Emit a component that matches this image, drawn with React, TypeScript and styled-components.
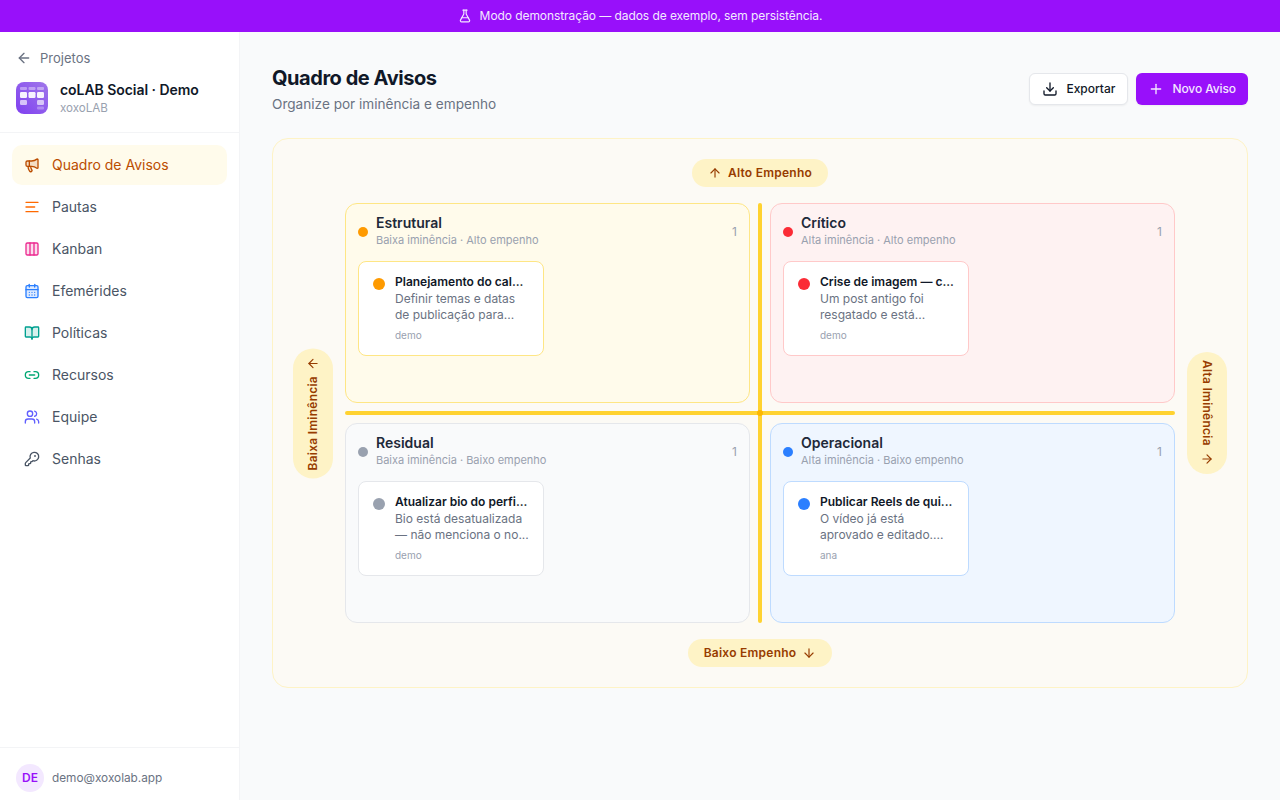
import React from "react";
import styled, { createGlobalStyle } from "styled-components";
import {
  ArrowDown,
  ArrowLeft,
  ArrowRight,
  ArrowUp,
  BookOpen,
  CalendarDays,
  Columns3,
  Download,
  FlaskConical,
  KeyRound,
  Link2,
  Megaphone,
  Plus,
  Users,
} from "lucide-react";

const Global = createGlobalStyle`
  * { box-sizing: border-box; }
  html, body { margin: 0; padding: 0; height: 100%; }
  body { font-family: Inter, "Noto Sans", sans-serif; background: #f9fafb; color: #101828; }
  #root { height: 100%; }
`;

const Page = styled.div`
  display: flex;
  flex-direction: column;
  height: 800px;
  overflow: hidden;
`;

const Banner = styled.div`
  height: 32px;
  flex: none;
  background: #9810fa;
  color: #f3e8ff;
  font-size: 12px;
  line-height: 16px;
  letter-spacing: -0.07px;
  display: flex;
  align-items: center;
  justify-content: center;
  gap: 8px;
`;

const Body = styled.div`
  flex: 1;
  display: flex;
  min-height: 0;
`;

const Sidebar = styled.aside`
  width: 240px;
  flex: none;
  background: #fff;
  border-right: 1px solid #f3f4f6;
  display: flex;
  flex-direction: column;
`;

const SideHead = styled.div`
  height: 101px;
  padding: 16px 16px 0;
  border-bottom: 1px solid #f3f4f6;
`;

const BackLink = styled.div`
  display: flex;
  align-items: center;
  gap: 8px;
  height: 20px;
  font-size: 13px;
  line-height: 20px;
  color: #6a7282;
  margin-bottom: 14px;
`;

const Project = styled.div`
  display: flex;
  align-items: center;
  gap: 12px;
  height: 32px;
`;

const ProjectText = styled.div`
  display: flex;
  flex-direction: column;
`;

const ProjectName = styled.div`
  font-size: 14px;
  line-height: 20px;
  font-weight: 600;
  color: #101828;
  letter-spacing: -0.05px;
`;

const ProjectOrg = styled.div`
  font-size: 11.6px;
  line-height: 16px;
  color: #99a1af;
`;

const Nav = styled.nav`
  flex: 1;
  padding: 12px;
  display: flex;
  flex-direction: column;
  gap: 2px;
`;

const NavItem = styled.div<{ $active?: boolean; $icon: string; $tint?: boolean }>`
  height: 40px;
  display: flex;
  align-items: center;
  gap: 12px;
  padding: 0 12px;
  border-radius: 10px;
  font-size: 14px;
  line-height: 20px;
  color: ${(p) => (p.$active ? "#bb4d00" : "#4a5565")};
  background: ${(p) => (p.$active ? "#fffbeb" : "transparent")};
  svg {
    color: ${(p) => p.$icon};
    flex: none;
    fill: ${(p) => (p.$tint ? "currentColor" : "none")};
    fill-opacity: 0.16;
  }
`;

const SideFoot = styled.div`
  height: 53px;
  flex: none;
  border-top: 1px solid #f3f4f6;
  padding: 16px 16px 0;
  display: flex;
  align-items: flex-start;
  gap: 8px;
`;

const Avatar = styled.div`
  width: 28px;
  height: 28px;
  border-radius: 50%;
  background: #f3e8ff;
  color: #9810fa;
  font-size: 12px;
  line-height: 16px;
  font-weight: 600;
  display: flex;
  align-items: center;
  justify-content: center;
`;

const Email = styled.div`
  font-size: 11.8px;
  line-height: 28px;
  color: #6a7282;
`;

const Main = styled.main`
  flex: 1;
  padding: 32px;
  background: #f9fafb;
  min-width: 0;
`;

const TopRow = styled.header`
  display: flex;
  justify-content: space-between;
  align-items: center;
  margin-bottom: 24px;
`;

const Title = styled.h1`
  margin: 0;
  font-size: 20px;
  line-height: 28px;
  font-weight: 700;
  letter-spacing: -0.45px;
  color: #101828;
`;

const Subtitle = styled.p`
  margin: 2px 0 0;
  font-size: 13.6px;
  line-height: 20px;
  color: #6a7282;
`;

const Actions = styled.div`
  display: flex;
  gap: 8px;
`;

const Button = styled.button<{ $primary?: boolean }>`
  height: 32px;
  display: flex;
  align-items: center;
  gap: 8px;
  padding: 0 12px;
  border-radius: 6px;
  font-family: inherit;
  font-size: 12px;
  line-height: 16px;
  font-weight: 500;
  letter-spacing: ${(p) => (p.$primary ? "-0.1px" : "0")};
  border: ${(p) => (p.$primary ? "none" : "1px solid #e5e7eb")};
  background: ${(p) => (p.$primary ? "#9810fa" : "#fff")};
  color: ${(p) => (p.$primary ? "#f3e8ff" : "#101828")};
  box-shadow: 0 1px 2px rgba(0, 0, 0, 0.05);
`;

const Board = styled.section`
  display: grid;
  grid-template-columns: 40px 830px 40px;
  grid-template-rows: 28px 420px 28px;
  gap: 16px 12px;
  padding: 20px;
  height: 550px;
  background: #fcfaf5;
  border: 1px solid #fef3c6;
  border-radius: 16px;
`;

const PillSlot = styled.div<{ $col: number; $row: number }>`
  grid-column: ${(p) => p.$col};
  grid-row: ${(p) => p.$row};
  display: flex;
  align-items: center;
  justify-content: center;
`;

const Pill = styled.div<{ $dir?: "up" | "down" }>`
  display: flex;
  align-items: center;
  gap: 6px;
  background: #fef3c6;
  color: #973c00;
  font-size: 12px;
  line-height: 16px;
  font-weight: 600;
  letter-spacing: 0.25px;
  border-radius: 999px;
  white-space: nowrap;
  padding: ${(p) => (p.$dir ? "8px 0" : "0 16px")};
  ${(p) => (p.$dir ? "width: 40px; justify-content: center; writing-mode: vertical-rl;" : "height: 28px;")}
  ${(p) => (p.$dir === "up" ? "transform: rotate(180deg);" : "")}
`;

const Matrix = styled.div`
  grid-column: 2;
  grid-row: 2;
  position: relative;
  display: grid;
  grid-template-columns: 1fr 1fr;
  grid-template-rows: 1fr 1fr;
  gap: 20px;
`;

const AxisV = styled.div`
  position: absolute;
  left: 413px;
  top: 0;
  bottom: 0;
  width: 4px;
  border-radius: 2px;
  background: #ffd230;
`;

const AxisH = styled.div`
  position: absolute;
  left: 0;
  right: 0;
  top: 208px;
  height: 4px;
  border-radius: 2px;
  background: #ffd230;
`;

const AxisDot = styled.div`
  position: absolute;
  left: 412px;
  top: 207px;
  width: 6px;
  height: 6px;
  border-radius: 50%;
  background: #fdb700;
`;

const tones = {
  amber: { bg: "#fffbeb", border: "#fee685", dot: "#fe9a00", card: "#fee685" },
  red: { bg: "#fef2f2", border: "#ffc9c9", dot: "#fb2c36", card: "#ffc9c9" },
  gray: { bg: "#f9fafb", border: "#e5e7eb", dot: "#99a1af", card: "#e5e7eb" },
  blue: { bg: "#eff6ff", border: "#bedbff", dot: "#2b7fff", card: "#bedbff" },
};
type Tone = keyof typeof tones;

const Cell = styled.div<{ $tone: Tone }>`
  background: ${(p) => tones[p.$tone].bg};
  border: 1px solid ${(p) => tones[p.$tone].border};
  border-radius: 12px;
  padding: 12px;
`;

const CellHead = styled.div`
  display: flex;
  align-items: center;
  gap: 8px;
  margin-bottom: 13px;
`;

const Dot = styled.span<{ $tone: Tone; $size: number }>`
  width: ${(p) => p.$size}px;
  height: ${(p) => p.$size}px;
  border-radius: 50%;
  flex: none;
  background: ${(p) => tones[p.$tone].dot};
`;

const CellText = styled.div`
  flex: 1;
  min-width: 0;
`;

const CellTitle = styled.div`
  font-size: 14px;
  line-height: 14px;
  margin-bottom: 2px;
  font-weight: 600;
  color: #1e2939;
`;

const CellSub = styled.div`
  font-size: 11px;
  line-height: 16px;
  color: #99a1af;
`;

const Count = styled.span`
  font-size: 12px;
  line-height: 16px;
  color: #99a1af;
`;

const Card = styled.article<{ $tone: Tone }>`
  width: 186px;
  background: #fff;
  border: 1px solid ${(p) => tones[p.$tone].card};
  border-radius: 8px;
  padding: 12px 14px;
  display: flex;
  gap: 10px;
  align-items: flex-start;
`;

const CardDot = styled(Dot)`
  margin-top: 4px;
`;

const CardBody = styled.div`
  flex: 1;
  min-width: 0;
`;

const CardTitle = styled.div`
  font-size: 12px;
  line-height: 16px;
  font-weight: 600;
  color: #101828;
`;

const CardText = styled.div`
  margin-top: 1px;
  font-size: 12px;
  line-height: 16px;
  color: #6a7282;
`;

const CardMeta = styled.div`
  margin-top: 5px;
  font-size: 10px;
  line-height: 15px;
  color: #99a1af;
`;

const Logo = () => (
  <svg width="32" height="32" viewBox="0 0 32 32" style={{ flex: "none" }}>
    <defs>
      <linearGradient id="lg" x1="1" y1="0" x2="0" y2="1">
        <stop offset="0" stopColor="#a078ea" />
        <stop offset="1" stopColor="#7f3ff0" />
      </linearGradient>
    </defs>
    <rect width="32" height="32" rx="8" fill="url(#lg)" />
    <g fill="#fff">
      <rect x="4" y="5" width="7" height="3" rx="1" opacity=".4" />
      <rect x="12.5" y="5" width="7" height="3" rx="1" opacity=".4" />
      <rect x="21" y="5" width="7" height="3" rx="1" opacity=".4" />
      <rect x="4" y="10" width="7" height="6" rx="1.2" opacity=".92" />
      <rect x="12.5" y="10" width="7" height="6" rx="1.2" opacity=".92" />
      <rect x="21" y="10" width="7" height="6" rx="1.2" opacity=".92" />
      <rect x="4" y="18" width="7" height="5" rx="1.2" opacity=".65" />
      <rect x="21" y="18" width="7" height="5" rx="1.2" opacity=".65" />
      <rect x="21" y="24.5" width="7" height="3" rx="1" opacity=".3" />
    </g>
  </svg>
);

const PautasIcon = ({ size }: { size: number }) => (
  <svg
    width={size}
    height={size}
    viewBox="0 0 24 24"
    stroke="currentColor"
    strokeWidth="2"
    strokeLinecap="round"
    style={{ fill: "none" }}
  >
    <line x1="3" y1="5" x2="21" y2="5" />
    <line x1="3" y1="12" x2="16" y2="12" />
    <line x1="3" y1="19" x2="21" y2="19" />
  </svg>
);

const navItems = [
  { label: "Quadro de Avisos", Icon: Megaphone, color: "#bb4d00", active: true, tint: true },
  { label: "Pautas", Icon: PautasIcon, color: "#ff6900" },
  { label: "Kanban", Icon: Columns3, color: "#ec2a90", tint: true },
  { label: "Efemérides", Icon: CalendarDays, color: "#2b7fff", tint: true },
  { label: "Políticas", Icon: BookOpen, color: "#00a090", tint: true },
  { label: "Recursos", Icon: Link2, color: "#00a773" },
  { label: "Equipe", Icon: Users, color: "#615fff" },
  { label: "Senhas", Icon: KeyRound, color: "#4a5565" },
];

const cells: { tone: Tone; name: string; sub: string; title: string; text: string; who: string }[] = [
  {
    tone: "amber",
    name: "Estrutural",
    sub: "Baixa iminência · Alto empenho",
    title: "Planejamento do cal...",
    text: "Definir temas e datas de publicação para...",
    who: "demo",
  },
  {
    tone: "red",
    name: "Crítico",
    sub: "Alta iminência · Alto empenho",
    title: "Crise de imagem — c...",
    text: "Um post antigo foi resgatado e está...",
    who: "demo",
  },
  {
    tone: "gray",
    name: "Residual",
    sub: "Baixa iminência · Baixo empenho",
    title: "Atualizar bio do perfi...",
    text: "Bio está desatualizada — não menciona o no...",
    who: "demo",
  },
  {
    tone: "blue",
    name: "Operacional",
    sub: "Alta iminência · Baixo empenho",
    title: "Publicar Reels de qui...",
    text: "O vídeo já está aprovado e editado....",
    who: "ana",
  },
];

export default function App() {
  return (
    <Page>
      <Global />
      <Banner>
        <FlaskConical size={14} />
        Modo demonstração — dados de exemplo, sem persistência.
      </Banner>
      <Body>
        <Sidebar>
          <SideHead>
            <BackLink>
              <ArrowLeft size={16} />
              Projetos
            </BackLink>
            <Project>
              <Logo />
              <ProjectText>
                <ProjectName>coLAB Social · Demo</ProjectName>
                <ProjectOrg>xoxoLAB</ProjectOrg>
              </ProjectText>
            </Project>
          </SideHead>
          <Nav>
            {navItems.map(({ label, Icon, color, active, tint }) => (
              <NavItem key={label} $active={active} $icon={color} $tint={tint}>
                <Icon size={16} />
                {label}
              </NavItem>
            ))}
          </Nav>
          <SideFoot>
            <Avatar>DE</Avatar>
            <Email>demo@xoxolab.app</Email>
          </SideFoot>
        </Sidebar>
        <Main>
          <TopRow>
            <div>
              <Title>Quadro de Avisos</Title>
              <Subtitle>Organize por iminência e empenho</Subtitle>
            </div>
            <Actions>
              <Button>
                <Download size={16} />
                Exportar
              </Button>
              <Button $primary>
                <Plus size={16} />
                Novo Aviso
              </Button>
            </Actions>
          </TopRow>
          <Board>
            <PillSlot $col={2} $row={1}>
              <Pill>
                <ArrowUp size={14} />
                Alto Empenho
              </Pill>
            </PillSlot>
            <PillSlot $col={1} $row={2}>
              <Pill $dir="up">
                Baixa Iminência
                <ArrowRight size={14} />
              </Pill>
            </PillSlot>
            <Matrix>
              {cells.map((c) => (
                <Cell key={c.name} $tone={c.tone}>
                  <CellHead>
                    <Dot $tone={c.tone} $size={10} />
                    <CellText>
                      <CellTitle>{c.name}</CellTitle>
                      <CellSub>{c.sub}</CellSub>
                    </CellText>
                    <Count>1</Count>
                  </CellHead>
                  <Card $tone={c.tone}>
                    <CardDot $tone={c.tone} $size={12} />
                    <CardBody>
                      <CardTitle>{c.title}</CardTitle>
                      <CardText>{c.text}</CardText>
                      <CardMeta>{c.who}</CardMeta>
                    </CardBody>
                  </Card>
                </Cell>
              ))}
              <AxisV />
              <AxisH />
              <AxisDot />
            </Matrix>
            <PillSlot $col={3} $row={2}>
              <Pill $dir="down">
                Alta Iminência
                <ArrowRight size={14} />
              </Pill>
            </PillSlot>
            <PillSlot $col={2} $row={3}>
              <Pill>
                Baixo Empenho
                <ArrowDown size={14} />
              </Pill>
            </PillSlot>
          </Board>
        </Main>
      </Body>
    </Page>
  );
}
